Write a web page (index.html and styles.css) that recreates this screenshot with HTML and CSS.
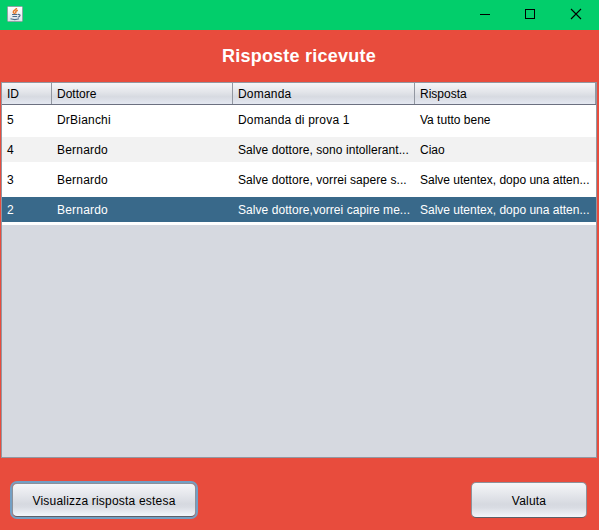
FILE: index.html
```html
<!DOCTYPE html>
<html lang="it">
<head>
<meta charset="utf-8">
<title>Risposte ricevute</title>
<link rel="stylesheet" href="styles.css">
</head>
<body>
<div class="window">
  <header class="titlebar">
    <svg class="java" width="16" height="16" viewBox="0 0 16 16">
      <defs><linearGradient id="paper" x2="0" y2="1"><stop stop-color="#fff"/><stop offset="1" stop-color="#dce3e8"/></linearGradient></defs>
      <rect x=".5" y=".5" width="15" height="15" rx="1" fill="url(#paper)" stroke="#8fa3a5"/>
      <path d="M9.500 2C9.500 4 6 4.300 6.300 6C6.500 7 7.500 7 7.500 8M10.800 4.200C8 5.300 8.500 6 9 7.500" fill="none" stroke="#e8792b" stroke-width="1.500"/>
      <path d="M5 8.500H10.500M5.500 10.500H10M3.500 12.800Q8 14.300 12 12.800M11 8.500c3-.4 2.500 2.200-.2 2.600" fill="none" stroke="#4d6d8c" stroke-width="1.200"/>
    </svg>
    <svg class="controls" width="106" height="12" viewBox="0 0 106 12" shape-rendering="crispEdges">
      <path d="M0 6.500H10M45.500 1.500H54.500V10.500H45.500Z" fill="none" stroke="#000"/>
      <path d="M91 1L101 11M101 1L91 11" fill="none" stroke="#000" stroke-width="1.100" shape-rendering="auto"/>
    </svg>
  </header>
  <h1>Risposte ricevute</h1>
  <main class="table-pane">
    <div class="row head"><span>ID</span><span>Dottore</span><span class="wide">Domanda</span><span>Risposta</span></div>
    <div class="row"><span>5</span><span class="wide">DrBianchi</span><span class="wide">Domanda di prova 1</span><span>Va tutto bene</span></div>
    <div class="row alt"><span>4</span><span class="wide">Bernardo</span><span class="question">Salve dottore, sono intollerant...</span><span>Ciao</span></div>
    <div class="row"><span>3</span><span class="wide">Bernardo</span><span class="question">Salve dottore, vorrei sapere s...</span><span>Salve utentex, dopo una atten...</span></div>
    <div class="row selected"><span>2</span><span class="wide">Bernardo</span><span class="question">Salve dottore,vorrei capire me...</span><span>Salve utentex, dopo una atten...</span></div>
  </main>
  <footer class="actions">
    <button class="focused">Visualizza risposta estesa</button>
    <button class="rate">Valuta</button>
  </footer>
</div>
</body>
</html>
```
FILE: styles.css
```css
* { box-sizing: border-box; }
body { margin: 0; font: 12px/14px "Liberation Sans", Arial, sans-serif; color: #000; }
.window { width: 599px; height: 530px; background: #e84c3d; display: flex; flex-direction: column; overflow: hidden; }
.titlebar { height: 30px; flex: none; background: #02ce6b; display: flex; justify-content: space-between; padding: 6px 13px 0 7px; }
.controls { margin-top: 2px; }
h1 { margin: 0; height: 52px; flex: none; font-size: 18px; line-height: 52px; text-align: center; letter-spacing: .24px; color: #fff; padding-right: 1px; }
.table-pane { margin: 0 2px 0 1px; height: 376px; flex: none; border: 1px solid #9297a1; background: #d6d9e0; }
.row { display: grid; grid-template-columns: 50px 181px 182px 1fr; height: 30px; padding: 2px 0 3px; background: #fff; }
.row span { padding: 6px 0 0 5px; white-space: nowrap; overflow: hidden; }
.row .wide { letter-spacing: .2px; }
.row .question { letter-spacing: .06px; }
.row.alt span { background: #f2f2f2; }
.row.selected span { background: #39698a; color: #fff; }
.row.head { height: 22px; padding: 0; border-bottom: 1px solid #6c7080; background: linear-gradient(#f5f6f8 0%, #e2e4e9 45%, #d7dae1 65%, #e4e8f1 100%); }
.row.head span { padding-top: 4px; border-right: 1px solid #9297a1; }
.actions { display: flex; align-items: center; justify-content: space-between; padding: 24px 12px 0 12px; }
button { margin: 0; padding: 1px 0 0; font: inherit; letter-spacing: .2px; color: #000; border: 1px solid #8d919a; border-bottom-color: #5d6068; border-radius: 5px; background: linear-gradient(#f5f6f8 0%, #e4e6eb 35%, #d6d9e0 62%, #d9dce3 72%, #f3f6fb 100%); }
.focused { width: 184px; height: 34px; box-shadow: 0 0 0 2px #739fc4; }
.rate { width: 116px; height: 36px; }
```
